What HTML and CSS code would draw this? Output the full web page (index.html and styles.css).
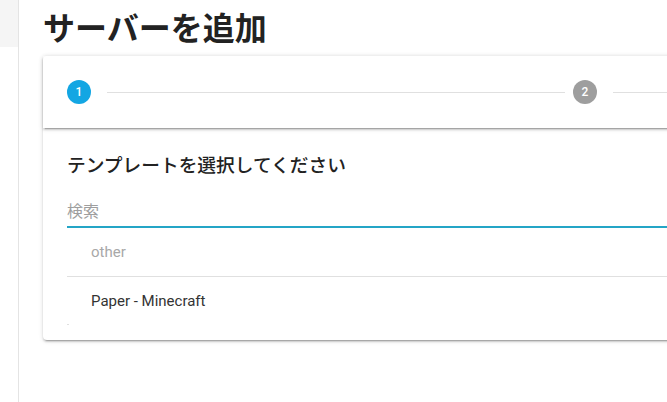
FILE: index.html
```html
<!DOCTYPE html>
<html lang="ja">
<head>
<meta charset="utf-8">
<title>サーバーを追加</title>
<link rel="stylesheet" href="styles.css">
</head>
<body>
<div class="layout">
  <aside class="sidebar"><div class="sidebar-top"></div></aside>
  <main class="main">
    <h1 class="page-title">サーバーを追加</h1>
    <section class="card">
      <div class="stepper-header">
        <div class="step"><span class="step-num active">1</span></div>
        <div class="step-divider"></div>
        <div class="step"><span class="step-num">2</span></div>
        <div class="step-divider"></div>
      </div>
      <div class="card-body">
        <h3 class="section-title">テンプレートを選択してください</h3>
        <div class="search-field"><span class="placeholder">検索</span></div>
        <div class="list">
          <div class="list-subheader">other</div>
          <div class="list-divider"></div>
          <div class="list-item">Paper - Minecraft</div>
          <div class="list-dot"></div>
        </div>
      </div>
    </section>
  </main>
</div>
</body>
</html>
```
FILE: styles.css
```css
html, body {
  margin: 0;
  padding: 0;
  overflow: hidden;
  background: #ffffff;
  font-family: Roboto, "Noto Sans CJK JP", sans-serif;
  color: rgba(0,0,0,0.87);
}
.layout {
  display: flex;
  min-height: 402px;
}
.sidebar {
  width: 18px;
  flex: none;
  border-right: 1px solid #e4e4e4;
}
.sidebar-top {
  height: 47px;
  background: #f5f5f5;
}
.main {
  flex: none;
  padding-left: 24px;
}
.page-title {
  margin: 6px 0 10px;
  font-size: 32px;
  line-height: 40px;
  font-weight: 700;
  color: #222;
  font-family: "Noto Sans CJK JP", sans-serif;
}
.card {
  width: 1012px;
  border-radius: 4px;
  background: #fff;
  box-shadow: 0 3px 1px -2px rgba(0,0,0,.2), 0 2px 2px 0 rgba(0,0,0,.14), 0 1px 5px 0 rgba(0,0,0,.12);
}
.stepper-header {
  height: 72px;
  display: flex;
  align-items: center;
  box-shadow: 0 3px 1px -2px rgba(0,0,0,.2), 0 2px 2px 0 rgba(0,0,0,.14), 0 1px 5px 0 rgba(0,0,0,.12);
  position: relative;
}
.step {
  padding: 24px;
  display: flex;
  align-items: center;
}
.step-num {
  width: 24px;
  height: 24px;
  margin-right: 8px;
  border-radius: 50%;
  background: #9e9e9e;
  color: #fff;
  font-size: 12px;
  font-weight: 500;
  display: flex;
  align-items: center;
  justify-content: center;
}
.step-num.active {
  background: #13a6e3;
}
.step-divider {
  flex: 1;
  height: 0;
  border-top: 1px solid #e0e0e0;
  margin: 0 -16px;
}
.card-body {
  padding: 24px 0 15px 24px;
}
.section-title {
  margin: 0 0 13px;
  font-size: 18.72px;
  line-height: 28px;
  font-weight: 500;
  color: #222;
}
.search-field {
  height: 33px;
  border-bottom: 2px solid #24a5c6;
  display: flex;
  align-items: center;
}
.placeholder {
  font-size: 16px;
  color: #9e9e9e;
}
.list-subheader {
  height: 48px;
  display: flex;
  align-items: center;
  padding-left: 24px;
  font-size: 15px;
  color: #a8a8a8;
}
.list-divider {
  border-top: 1px solid #e0e0e0;
}
.list-item {
  height: 47px;
  display: flex;
  align-items: center;
  padding-left: 24px;
  font-size: 15px;
  color: #333;
}
.list-dot {
  width: 2px;
  height: 1px;
  background: #e0e0e0;
}
```
